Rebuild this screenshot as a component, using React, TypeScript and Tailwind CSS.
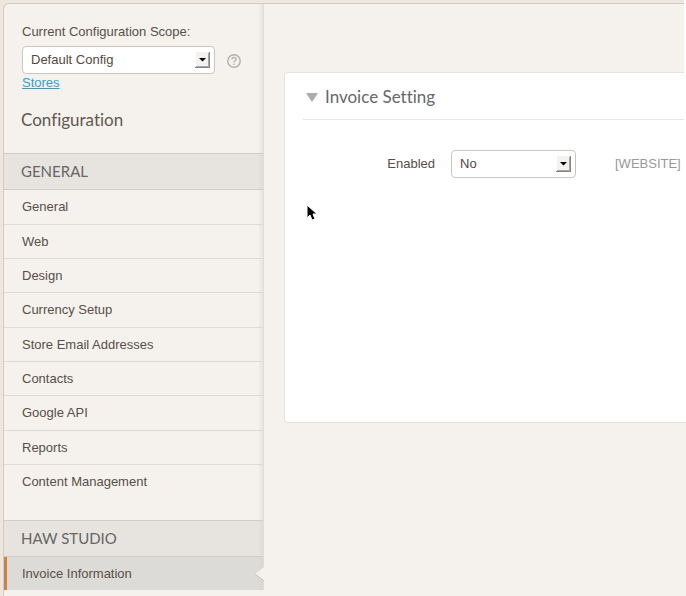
import { useState } from 'react';
import type { ReactNode } from 'react';

const generalItems = [
  'General',
  'Web',
  'Design',
  'Currency Setup',
  'Store Email Addresses',
  'Contacts',
  'Google API',
  'Reports',
  'Content Management',
];

function Select({ id, options, className }: { id: string; options: string[]; className: string }) {
  return (
    <div className={`relative h-7 ${className}`}>
      <select
        id={id}
        className="h-full w-full appearance-none rounded border border-[#c9c6c1] bg-white pr-6 pl-2 text-[13px] text-[#514943]"
      >
        {options.map((o) => (
          <option key={o}>{o}</option>
        ))}
      </select>
      <svg className="pointer-events-none absolute top-1.5 right-1 h-4 w-4" viewBox="0 0 16 16" aria-hidden="true">
        <rect x="1" y="0" width="14" height="16" fill="#f3f2f1" />
        <path d="M14.5 0v16M0 15.5h15" fill="none" stroke="#85827f" />
        <path d="M13.5 1v13.5H1" fill="none" stroke="#a9a7a5" />
        <path d="M4 6h7L7.500 9.500z" fill="#000" />
      </svg>
    </div>
  );
}

function GroupTitle({ children }: { children: ReactNode }) {
  return (
    <h2 className="flex h-[37px] items-center border-y border-[#d0cdc8] bg-[#e7e4e0] pl-[17px] font-['Lato',sans-serif] text-[15px] text-[#666]">
      {children}
    </h2>
  );
}

function Sidebar() {
  return (
    <aside className="relative w-[260px] shrink-0">
      <div className="px-[18px] pt-[18px]">
        <label htmlFor="scope" className="block h-6 leading-5">
          Current Configuration Scope:
        </label>
        <div className="flex items-center gap-3">
          <Select id="scope" options={['Default Config']} className="w-[193px]" />
          <button type="button" aria-label="Help" className="mt-0.5">
            <svg className="h-3.5 w-3.5" viewBox="0 0 14 14" fill="none" stroke="#b3afa9" strokeWidth="1.4" aria-hidden="true">
              <circle cx="7" cy="7" r="6.200" />
              <path d="M4.900 5.500C4.900 2.900 9.200 3 9.200 5.300 9.200 6.900 7 6.700 7 8.500M7 9.700v1.300" />
            </svg>
          </button>
        </div>
        <a href="#stores" className="block leading-[18px] text-[#2ea0cf] underline">
          Stores
        </a>
        <h1 className="-ml-px pt-4 pb-[21px] font-['Lato',sans-serif] text-[17px] leading-6 text-[#5f584f] [font-variant-ligatures:none]">
          Configuration
        </h1>
      </div>
      <nav>
        <GroupTitle>GENERAL</GroupTitle>
        <ul className="pb-[21px]">
          {generalItems.map((item) => (
            <li
              key={item}
              className="h-[34px] border-b border-[#dedbd6] last:border-b-0 nth-[3n+1]:h-[35px]"
            >
              <a href="#section" className="flex h-full items-center pl-[18px]">
                {item}
              </a>
            </li>
          ))}
        </ul>
        <GroupTitle>HAW STUDIO</GroupTitle>
        <a
          href="#invoice"
          aria-current="page"
          className="flex h-[33px] items-center border-l-3 border-[#cf8148] bg-[#dddbd7] pl-[15px]"
        >
          Invoice Information
        </a>
      </nav>
      <div className="pointer-events-none absolute inset-y-0 right-0 w-1.5 border-r border-[#e0ddd8] bg-linear-to-r from-transparent to-[#d3cfc9]/40" />
      <svg className="absolute right-0 bottom-2 h-4 w-2.5" viewBox="0 0 10 16" aria-hidden="true">
        <path d="M10 1L1 8l9 7z" fill="#f5f2ed" />
        <path d="M1 8l9 7" stroke="#c4c1bc" />
      </svg>
    </aside>
  );
}

function SettingPanel() {
  const [open, setOpen] = useState(true);
  return (
    <section className="min-h-[351px] rounded-l border border-r-0 border-[#e6e2dd] bg-white pl-[18px]">
      <h2 className="border-b border-[#e6e6e6] font-['Lato',sans-serif] text-[17px] text-[#666] [font-variant-ligatures:none]">
        <button
          type="button"
          aria-expanded={open}
          onClick={() => setOpen(!open)}
          className="flex h-[46px] w-full items-center gap-[7px] pt-0.5 pl-[3px]"
        >
          <svg className="h-[9px] w-3" viewBox="0 0 12 9" aria-hidden="true">
            <path d="M0 0h12L6 9z" fill="#adaaa7" />
          </svg>
          Invoice Setting
        </button>
      </h2>
      {open && (
        <div className="flex items-center pt-[30px]">
          <label htmlFor="enabled" className="w-[132px] text-right">
            Enabled
          </label>
          <Select id="enabled" options={['No', 'Yes']} className="ml-4 w-[125px]" />
          <span className="ml-[39px] text-[#999]">[WEBSITE]</span>
        </div>
      )}
    </section>
  );
}

export default function App() {
  return (
    <div className="relative flex min-h-screen flex-col bg-[#efe6dd] pt-[3px] pl-[3px] font-['Liberation_Sans',Arial,sans-serif] text-[13px] text-[#574f48]">
      <div className="flex flex-1 items-stretch rounded-tl-md border-t border-l border-[#d0cbc4] bg-[#f5f2ed]">
        <div className="flex pb-[7px]">
          <Sidebar />
        </div>
        <main className="min-w-0 flex-1 pt-[68px] pl-5">
          <SettingPanel />
        </main>
      </div>
      <div className="pointer-events-none absolute top-0 right-0 h-[421px] w-0.5 bg-white" />
      <svg className="pointer-events-none absolute top-[203px] left-[305px] h-[19px] w-3.5" viewBox="0 0 14 19" aria-hidden="true">
        <path d="M2 2v13l3-3 2 5 3-1-2-5h4z" fill="#000" stroke="#fff" />
      </svg>
    </div>
  );
}
